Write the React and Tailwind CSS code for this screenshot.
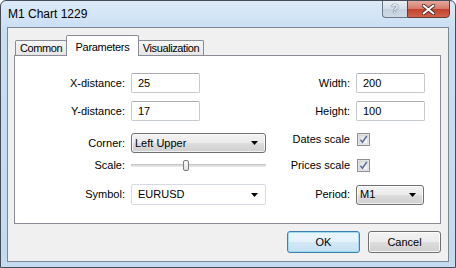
const font = { fontFamily: '"Liberation Sans", Arial, sans-serif' };

function TextBox({ value }) {
  return (
    <div className="flex h-[20px] w-[69px] items-center rounded-[2px] border border-[#c5c9d0] border-t-[#abadb3] bg-white pl-[6px] text-[11px] text-black">
      {value}
    </div>
  );
}

function Arrow() {
  return (
    <svg width="7" height="4" viewBox="0 0 7 4" className="shrink-0">
      <path d="M0 0H7L3.5 4Z" fill="#000" />
    </svg>
  );
}

function Combo({ value, width, editable }) {
  return (
    <div
      className={
        editable
          ? "flex h-[21px] items-center justify-between rounded-[2px] border border-[#d6dbe3] bg-white pl-[6px] pr-[7px] text-[11px] text-black"
          : "flex h-[20px] items-center justify-between rounded-[3px] border border-[#707070] bg-[linear-gradient(#f2f2f2_0%,#ebebeb_50%,#dddddd_51%,#cfcfcf_100%)] pl-[3px] pr-[7px] text-[11px] text-black shadow-[inset_0_0_0_1px_rgba(255,255,255,0.7)]"
      }
      style={{ width }}
    >
      <span>{value}</span>
      <Arrow />
    </div>
  );
}

function Check() {
  return (
    <svg width="13" height="13" viewBox="0 0 13 13">
      <defs>
        <linearGradient id="cb" x1="0" y1="0" x2="1" y2="1">
          <stop offset="0" stopColor="#dcdcdc" />
          <stop offset="1" stopColor="#fbfbfb" />
        </linearGradient>
      </defs>
      <rect x="0.5" y="0.5" width="12" height="12" fill="#f4f4f4" stroke="#8e8f8f" />
      <rect x="2" y="2" width="9" height="9" fill="url(#cb)" stroke="#b8bcc4" strokeWidth="0.6" />
      <path d="M3.4 6.8L5.4 9.2L9.8 3" fill="none" stroke="#5a6c9c" strokeWidth="1.5" />
    </svg>
  );
}

function Label({ children }) {
  return <div className="text-right text-[11px] text-black">{children}</div>;
}

function Row({ className, children }) {
  return (
    <div className={`grid grid-cols-[110px_135px_78px_69px] items-center gap-x-[6px] ${className}`}>
      {children}
    </div>
  );
}

function Button({ children, focused }) {
  return (
    <div
      className={
        "flex h-[22px] w-[73px] items-center justify-center rounded-[3px] border text-[11px] text-black " +
        (focused
          ? "border-[#3c7fb1] bg-[linear-gradient(#eaf6fd_0%,#e4f2fb_50%,#d2e8f6_51%,#c6e0f1_100%)] shadow-[inset_0_0_0_1px_#9fdcf4]"
          : "border-[#707070] bg-[linear-gradient(#f2f2f2_0%,#ebebeb_50%,#dddddd_51%,#cfcfcf_100%)] shadow-[inset_0_0_0_1px_rgba(255,255,255,0.8)]")
      }
    >
      {children}
    </div>
  );
}

export default function App() {
  return (
    <div
      className="flex h-[268px] w-[456px] flex-col overflow-hidden rounded-t-[6px] border border-[#434c57] bg-[linear-gradient(#dceaf8,#c9def3_30px,#c3daf1)]"
      style={font}
    >
      {/* title bar */}
      <div className="flex h-[26px] shrink-0 items-start justify-between">
        <div className="flex h-[26px] items-center pl-[7px] text-[12px] text-black">M1 Chart 1229</div>
        <div className="-mt-px mr-[5px] flex h-[18px]">
          <div className="flex w-[25px] items-center justify-center rounded-bl-[4px] border border-r-0 border-[#6b7785] bg-[linear-gradient(#e8eef5,#d4dee9_50%,#c4d0dd_51%,#cfdae6)] text-[12px] font-bold text-[#f4f6f9] [text-shadow:0_0_1px_#43505e,0_0_1px_#43505e]">
            ?
          </div>
          <div className="flex w-[43px] items-center justify-center rounded-br-[4px] border border-[#6b3a36] bg-[linear-gradient(#e5a89d,#d47968_50%,#c4412d_51%,#d0624b)]">
            <svg width="13" height="11" viewBox="0 0 13 11">
              <path d="M1.5 1.5L11.5 9.5M11.5 1.5L1.5 9.5" stroke="#4a2a26" strokeWidth="3.6" strokeLinecap="round" />
              <path d="M1.5 1.5L11.5 9.5M11.5 1.5L1.5 9.5" stroke="#ffffff" strokeWidth="2" strokeLinecap="round" />
            </svg>
          </div>
        </div>
      </div>

      {/* client area */}
      <div className="mx-[6px] flex h-[235px] flex-col border border-[#7f8791] bg-[#f0f0f0] pl-[6px] pr-[7px] pt-[7px]">
        {/* tabs */}
        <div className="relative z-10 -mb-px flex h-[21px] items-end pl-[1px]">
          <div className="mb-px flex h-[15px] w-[52px] items-center justify-center rounded-t-[2px] border border-b-0 border-[#898c95] bg-[linear-gradient(#f6f6f6,#e6e6e6)] pt-px text-[11px] tracking-[-0.4px] text-black">
            Common
          </div>
          <div className="-ml-px flex h-[21px] w-[73px] items-start justify-center rounded-t-[2px] border border-b-0 border-[#898c95] bg-white pt-[3px] text-[11px] tracking-[-0.3px] text-black">
            Parameters
          </div>
          <div className="mb-px -ml-px flex h-[15px] w-[66px] items-center justify-center rounded-t-[2px] border border-b-0 border-[#898c95] bg-[linear-gradient(#f6f6f6,#e6e6e6)] pt-px text-[11px] tracking-[-0.4px] text-black">
            Visualization
          </div>
        </div>

        {/* panel */}
        <div className="flex h-[169px] flex-col border border-[#898c95] bg-white pt-[17px]">
          <Row className="h-[20px]">
            <Label>X-distance:</Label>
            <TextBox value="25" />
            <Label>Width:</Label>
            <TextBox value="200" />
          </Row>
          <Row className="mt-[8px] h-[20px]">
            <Label>Y-distance:</Label>
            <TextBox value="17" />
            <Label>Height:</Label>
            <TextBox value="100" />
          </Row>
          <Row className="mt-[10px] h-[20px]">
            <Label>Corner:</Label>
            <Combo value="Left Upper" width={135} />
            <div className="mb-[7px]">
              <Label>Dates scale</Label>
            </div>
            <div className="mb-[7px] flex pl-px">
              <Check />
            </div>
          </Row>
          <Row className="mt-[6px] h-[14px]">
            <Label>Scale:</Label>
            <div className="relative flex h-[14px] items-center">
              <div className="h-[3px] w-full border-y border-t-[#c8c8c8] border-b-[#e8e8e8] bg-[#dadada]" />
              <div className="absolute left-[52px] top-[2px] h-[11px] w-[6px] rounded-[2px] border border-[#7b7b7b] bg-[linear-gradient(#fafafa,#e0e0e0)]" />
            </div>
            <Label>Prices scale</Label>
            <div className="flex pl-px">
              <Check />
            </div>
          </Row>
          <Row className="mt-[13px] h-[21px]">
            <Label>Symbol:</Label>
            <Combo value="EURUSD" width={135} editable />
            <Label>Period:</Label>
            <Combo value="M1" width={68} />
          </Row>
        </div>

        {/* buttons */}
        <div className="mt-[7px] flex justify-end gap-[8px]">
          <Button focused>OK</Button>
          <Button>Cancel</Button>
        </div>
      </div>
    </div>
  );
}
